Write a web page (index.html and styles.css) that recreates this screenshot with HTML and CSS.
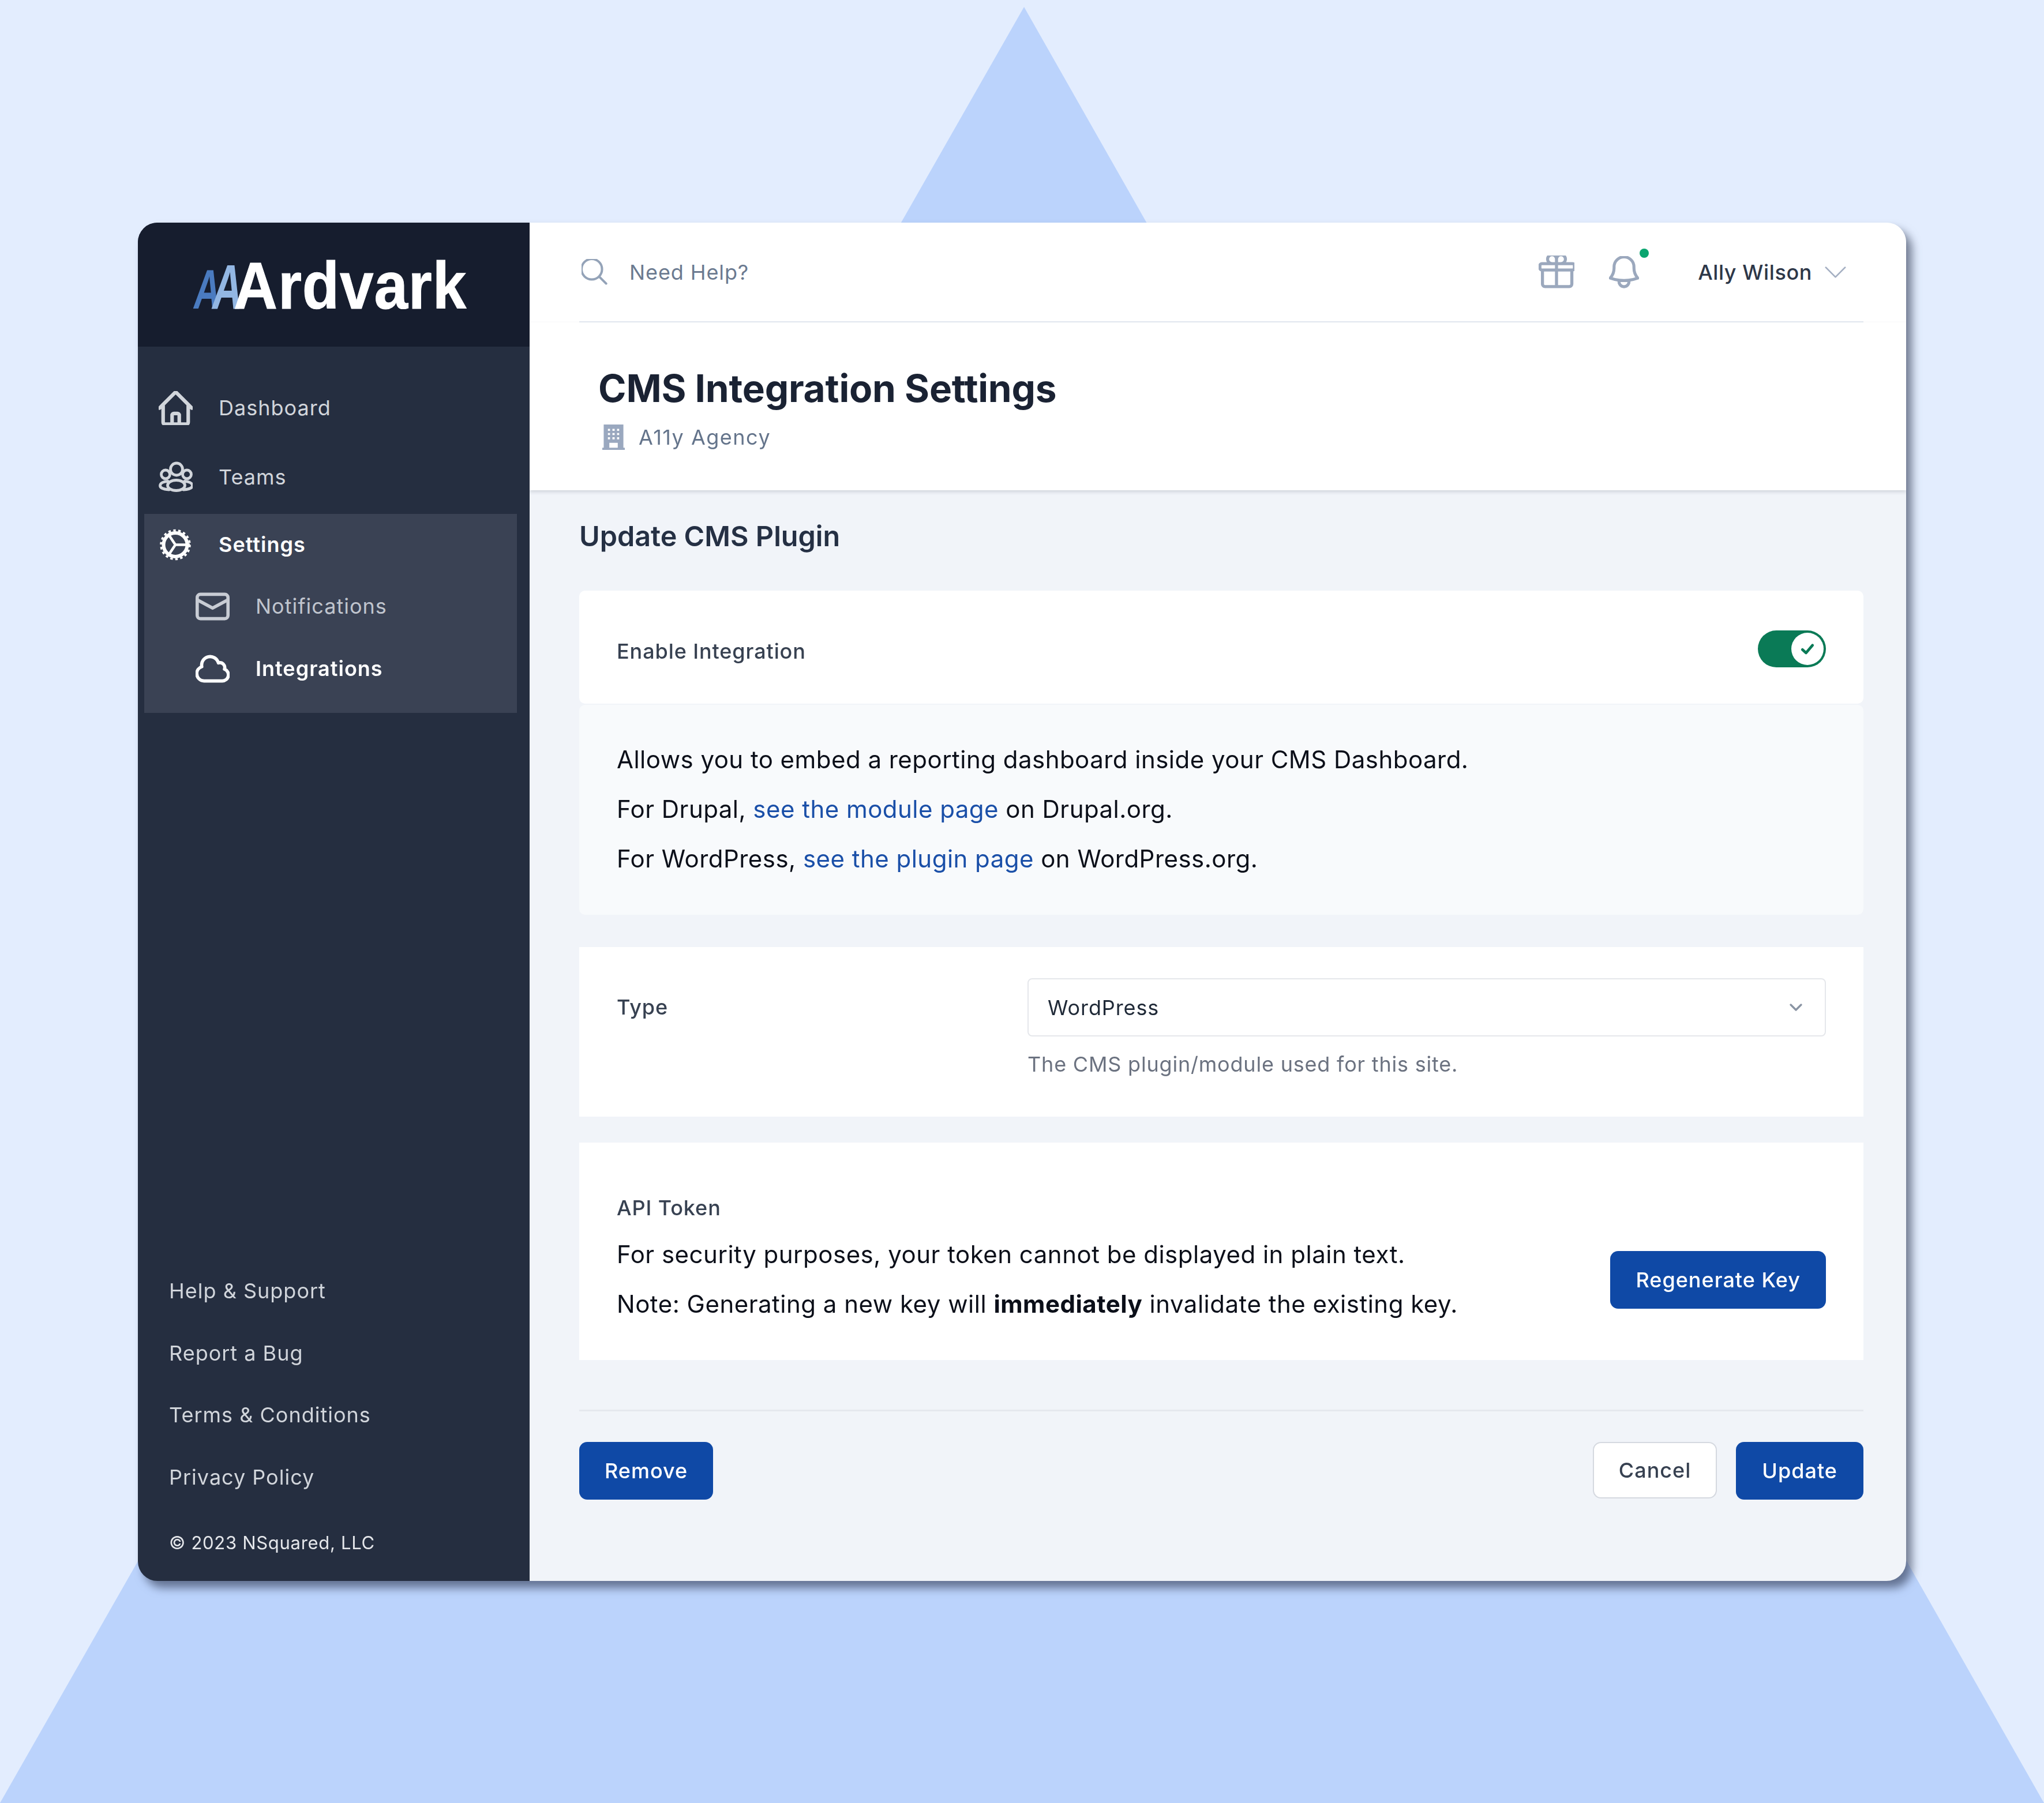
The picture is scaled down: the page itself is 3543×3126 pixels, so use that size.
FILE: index.html
```html
<!DOCTYPE html>
<html lang="en">
<head>
    <meta charset="UTF-8">
    <title>CMS Integration Settings</title>
    <link rel="stylesheet" href="styles.css">
</head>
<body>
    <div class="backdrop"></div>
    <div class="window">
        <aside class="sidebar">
            <div class="logo"><span class="logo-a logo-a1">A</span><span class="logo-a logo-a2">A</span><span class="logo-word">Ardvark</span></div>
            <nav class="nav">
                <a class="nav-item">
                    <svg class="icon icon-bold" viewBox="2.5 2.5 19 19"><path d="M3 12l2-2m0 0l7-7 7 7M5 10v10a1 1 0 001 1h3m10-11l2 2m-2-2v10a1 1 0 01-1 1h-3m-6 0a1 1 0 001-1v-4a1 1 0 011-1h2a1 1 0 011 1v4a1 1 0 001 1m-6 0h6"/></svg>
                    Dashboard
                </a>
                <a class="nav-item">
                    <svg class="icon icon-team" viewBox="9 7.500 59 59"><circle cx="40" cy="23" r="10.500"/><circle cx="21" cy="32" r="7.500"/><circle cx="58" cy="32" r="7.500"/><ellipse cx="39.500" cy="51" rx="15" ry="9"/><path d="M25 44c-8 0-13.500 3.500-13.500 7.500S18 58 27 58.500M54 44c8 0 13.500 3.500 13.500 7.500S61 58 52 58.500"/></svg>
                    Teams
                </a>
                <div class="nav-group">
                    <a class="nav-item nav-parent">
                        <svg class="icon icon-white icon-cog" viewBox="10 10.500 59 59"><circle cx="39" cy="40" r="20.500" stroke-width="6"/><circle class="teeth" cx="39" cy="40" r="25"/><path d="M39 40h25M39 40L27 22M39 40L27 58"/></svg>
                        Settings
                    </a>
                    <a class="nav-item nav-sub">
                        <svg class="icon icon-sub icon-bold" viewBox="1.500 3.500 21 17"><rect x="2.500" y="4.500" width="19" height="15" rx="2"/><path d="M2.700 8l9.300 5 9.300-5"/></svg>
                        Notifications
                    </a>
                    <a class="nav-item nav-sub nav-current">
                        <svg class="icon icon-white icon-bold" viewBox="1.500 3.500 21 17"><path d="M2.250 15a4.500 4.500 0 0 0 4.500 4.500H18a3.750 3.750 0 0 0 1.332-7.257 3 3 0 0 0-3.758-3.848 5.250 5.250 0 0 0-10.233 2.330A4.502 4.502 0 0 0 2.250 15Z"/></svg>
                        Integrations
                    </a>
                </div>
            </nav>
            <div class="side-foot">
                <a class="foot-link">Help &amp; Support</a>
                <a class="foot-link">Report a Bug</a>
                <a class="foot-link">Terms &amp; Conditions</a>
                <a class="foot-link">Privacy Policy</a>
                <p class="copyright">© 2023 NSquared, LLC</p>
            </div>
        </aside>

        <main class="main">
            <div class="top-wrap">
                <header class="topbar">
                    <div class="search">
                        <svg class="search-icon" viewBox="3 3 19 19"><path d="m21 21-5.197-5.197m0 0A7.500 7.500 0 1 0 5.196 5.196a7.500 7.500 0 0 0 10.607 10.607Z"/></svg>
                        <span>Need Help?</span>
                    </div>
                    <svg class="gift" viewBox="1.500 3 21 18.800"><path d="M21 11.250v8.250a1.500 1.500 0 0 1-1.500 1.500H5.250a1.500 1.500 0 0 1-1.500-1.500v-8.250M12 4.875A2.625 2.625 0 1 0 9.375 7.500H12m0-2.625V7.500m0-2.625A2.625 2.625 0 1 1 14.625 7.500H12m0 0V21m-8.625-9.750h18c.621 0 1.125-.504 1.125-1.125v-1.500c0-.621-.504-1.125-1.125-1.125h-18c-.621 0-1.125.504-1.125 1.125v1.500c0 .621.504 1.125 1.125 1.125Z"/></svg>
                    <div class="bell-wrap">
                        <svg class="bell" viewBox="3 2.500 18 19.500"><path d="M14.857 17.082a23.848 23.848 0 0 0 5.454-1.310A8.967 8.967 0 0 1 18 9.750V9A6 6 0 0 0 6 9v.75a8.967 8.967 0 0 1-2.312 6.022c1.733.64 3.560 1.085 5.455 1.310m5.714 0a24.255 24.255 0 0 1-5.714 0m5.714 0a3 3 0 1 1-5.714 0"/></svg>
                        <span class="dot"></span>
                    </div>
                    <div class="user">
                        <span>Ally Wilson</span>
                        <svg class="user-chevron" viewBox="4 7.500 16 9"><path d="m19.500 8.250-7.500 7.500-7.500-7.500"/></svg>
                    </div>
                </header>
            </div>

            <section class="page-head">
                <h1>CMS Integration Settings</h1>
                <div class="agency">
                    <svg class="building" viewBox="0 0 16 18"><path fill-rule="evenodd" d="M1 0h14v16.500h1V18H0v-1.500h1zM4 3v1.500h1.500V3zm3.200 0v1.500h1.600V3zm3.300 0v1.500H12V3zM4 6v1.500h1.500V6zm3.200 0v1.500h1.600V6zm3.300 0v1.500H12V6zM4 9v1.500h1.500V9zm3.200 0v1.500h1.600V9zm3.300 0v1.500H12V9zM5 13v3.500h6V13z"/></svg>
                    <span>A11y Agency</span>
                </div>
            </section>

            <section class="content">
                <h2>Update CMS Plugin</h2>

                <div class="card card-toggle">
                    <span class="label">Enable Integration</span>
                    <span class="toggle">
                        <span class="toggle-knob">
                            <svg viewBox="0 0 12 12"><path d="M2.500 6.500l2.500 2.300 4.500-5.300"/></svg>
                        </span>
                    </span>
                </div>

                <div class="card card-info">
                    <p>Allows you to embed a reporting dashboard inside your CMS Dashboard.</p>
                    <p>For Drupal, <a class="link">see the module page</a> on Drupal.org.</p>
                    <p>For WordPress, <a class="link">see the plugin page</a> on WordPress.org.</p>
                </div>

                <div class="card card-type">
                    <span class="label type-label">Type</span>
                    <div>
                        <div class="select">
                            <span>WordPress</span>
                            <svg viewBox="0 0 20 20"><path d="M5.500 7.500l4.500 4.500 4.500-4.500"/></svg>
                        </div>
                        <p class="hint">The CMS plugin/module used for this site.</p>
                    </div>
                </div>

                <div class="card card-token">
                    <div>
                        <div class="label token-label">API Token</div>
                        <p>For security purposes, your token cannot be displayed in plain text.</p>
                        <p>Note: Generating a new key will <strong>immediately</strong> invalidate the existing key.</p>
                    </div>
                    <button class="btn btn-primary btn-regen">Regenerate Key</button>
                </div>

                <div class="actions">
                    <button class="btn btn-primary">Remove</button>
                    <div class="actions-right">
                        <button class="btn btn-plain">Cancel</button>
                        <button class="btn btn-primary btn-update">Update</button>
                    </div>
                </div>
            </section>
        </main>
    </div>
</body>
</html>
```

FILE: styles.css
```css
* {
    box-sizing: border-box;
}
html, body {
    margin: 0;
    padding: 0;
}
body {
    position: relative;
    width: 3543px;
    height: 3126px;
    padding: 386px 239px 0;
    overflow: hidden;
    background-color: #e3edfe;
    font-family: Inter, "Noto Sans", sans-serif;
    font-size: 36px;
    letter-spacing: 0.9px;
    color: #111827;
}
p, h1, h2 {
    margin: 0;
}
svg {
    flex: none;
    fill: none;
    stroke: currentColor;
    stroke-linecap: round;
    stroke-linejoin: round;
    stroke-width: 1.7;
}

/* big triangle behind the window */
.backdrop {
    position: absolute;
    top: 12px;
    left: 0;
    width: 3543px;
    height: 3114px;
    background-color: #bbd3fc;
    clip-path: polygon(50.1% 0, 100% 100%, 0 100%);
}

.window {
    position: relative;
    display: flex;
    width: 3065px;
    height: 2355px;
    border-radius: 34px;
    filter: drop-shadow(10px 12px 8px rgba(45, 55, 80, 0.62));
}

/* sidebar */
.sidebar {
    display: flex;
    flex-direction: column;
    flex: none;
    width: 679px;
    border-radius: 34px 0 0 34px;
    overflow: hidden;
    background-color: #252e40;
    color: #d1d5db;
}
.logo {
    display: flex;
    align-items: baseline;
    flex: none;
    height: 215px;
    padding: 43px 0 0 97px;
    background-color: #161d2e;
    color: #fff;
    font-family: "Liberation Sans", Arial, sans-serif;
    font-weight: 700;
    letter-spacing: 0;
}
.logo-a {
    display: block;
    font-style: italic;
    transform: scaleX(0.66);
    transform-origin: left bottom;
}
.logo-a1 {
    width: 32px;
    font-size: 96px;
    color: #4a7bc0;
}
.logo-a2 {
    width: 37px;
    font-size: 109px;
    color: #93b7e3;
}
.logo-word {
    font-size: 115px;
    letter-spacing: 1px;
    -webkit-text-stroke: 1px #fff;
    transform: scaleX(0.915);
    transform-origin: left bottom;
}
.nav {
    padding: 47px 22px 0 11px;
    letter-spacing: 1px;
}
.nav-item {
    display: flex;
    align-items: center;
    gap: 45px;
    height: 118px;
    margin-bottom: 2px;
    padding-left: 25px;
}
.icon {
    width: 59px;
    height: 59px;
    color: #d1d5db;
}
.icon-bold {
    stroke-width: 2;
}
.icon-team {
    stroke-width: 4.800;
}
.icon-cog {
    stroke-width: 4.500;
    stroke-linecap: butt;
}
.icon-white {
    color: #fff;
}
.icon-sub {
    color: #c8ccd4;
}
.teeth {
    stroke-width: 3.500;
    stroke-dasharray: 4.360 4.360;
    stroke-linecap: butt;
}
.nav-group {
    margin-top: 5px;
    padding-bottom: 23px;
    background-color: #3a4254;
}
.nav-parent {
    height: 106px;
    margin: 0;
    color: #fff;
    font-weight: 600;
}
.nav-sub {
    height: 108px;
    margin: 0;
    padding-left: 89px;
    color: #c0c5ce;
}
.nav-current {
    color: #fff;
    font-weight: 600;
}
.side-foot {
    margin-top: auto;
    padding: 0 0 38px 54px;
    letter-spacing: 1px;
}
.foot-link {
    display: block;
    height: 107.500px;
    line-height: 107.500px;
}
.copyright {
    margin-top: 32px;
    font-size: 31px;
    line-height: 56px;
    letter-spacing: 0.7px;
    color: #e5e7eb;
}

/* main column */
.main {
    display: flex;
    flex-direction: column;
    flex: 1;
    border-radius: 0 34px 34px 0;
    overflow: hidden;
    background-color: #f1f4f9;
}
.top-wrap {
    flex: none;
    padding: 0 74px 0 86px;
    background-color: #fff;
}
.topbar {
    display: flex;
    align-items: center;
    height: 174px;
    padding: 0 30px 0 4px;
    border-bottom: 3px solid #e5eaf1;
}
.search {
    display: flex;
    align-items: center;
    gap: 38px;
    flex: 1;
    color: #6b7a90;
}
.search-icon {
    width: 45px;
    height: 45px;
    color: #94a3b8;
}
.gift {
    width: 62px;
    height: 57px;
    color: #9ba8bd;
    stroke-width: 1.8;
}
.bell-wrap {
    position: relative;
    margin-left: 60px;
    display: flex;
}
.bell {
    width: 52px;
    height: 56px;
    color: #9ba8bd;
    stroke-width: 1.8;
}
.dot {
    position: absolute;
    top: -13px;
    left: 53px;
    width: 16px;
    height: 16px;
    border-radius: 50%;
    background-color: #0aa56f;
}
.user {
    display: flex;
    align-items: center;
    gap: 22px;
    margin-left: 102px;
    color: #2d3748;
    font-weight: 500;
    letter-spacing: 0.6px;
}
.user-chevron {
    width: 37px;
    height: 20px;
    color: #a4afc2;
    stroke-width: 1.2;
}
.page-head {
    flex: none;
    height: 291px;
    padding: 83px 0 0 119px;
    margin-top: -1px;
    background-color: #fff;
    box-shadow: 0 3px 6px rgba(60, 70, 90, 0.18);
}
.page-head h1 {
    font-size: 65.700px;
    line-height: 62px;
    font-weight: 700;
    letter-spacing: -0.2px;
    color: #1a2233;
}
.agency {
    display: flex;
    align-items: center;
    gap: 24px;
    margin-top: 32px;
    padding-left: 7px;
    letter-spacing: 1.5px;
    color: #64748b;
}
.building {
    width: 39px;
    height: 44px;
    fill: #9aa8bf;
    stroke: none;
}
.content {
    flex: 1;
    padding: 54px 74px 0 86px;
}
.content h2 {
    font-size: 48.500px;
    line-height: 52px;
    font-weight: 600;
    letter-spacing: 0;
    color: #253044;
}
.card {
    background-color: #fff;
    border-radius: 10px;
    padding: 0 65px;
}
.label {
    color: #374151;
    font-weight: 500;
}
.card-toggle {
    display: flex;
    align-items: center;
    justify-content: space-between;
    height: 196px;
    margin-top: 68px;
}
.card-toggle .label {
    margin-top: 14px;
}
.toggle {
    display: flex;
    align-items: center;
    justify-content: flex-end;
    width: 118px;
    height: 64px;
    margin-top: 5px;
    padding-right: 4px;
    border-radius: 32px;
    background-color: #0a7a56;
}
.toggle-knob {
    display: flex;
    align-items: center;
    justify-content: center;
    width: 56px;
    height: 56px;
    border-radius: 50%;
    background-color: #fff;
    color: #0a7a56;
}
.toggle-knob svg {
    width: 30px;
    height: 30px;
    stroke-width: 1.900;
}
.card-info {
    height: 364px;
    margin-top: 2px;
    padding-top: 52px;
    background-color: #f8fafc;
    line-height: 86px;
    font-size: 42px;
    letter-spacing: 0.47px;
    color: #0b0f19;
}
.link {
    color: #1a4fa8;
}
.card-type {
    display: grid;
    grid-template-columns: 712px 1fr;
    height: 294px;
    margin-top: 56px;
    padding-top: 54px;
    border-radius: 0;
}
.type-label {
    line-height: 101px;
}
.select {
    display: flex;
    align-items: center;
    justify-content: space-between;
    height: 101px;
    padding: 0 30px 0 33px;
    border: 2px solid #e5e7eb;
    border-radius: 8px;
    color: #1f2937;
}
.select svg {
    width: 40px;
    height: 40px;
    color: #8a94a3;
}
.hint {
    margin-top: 26px;
    line-height: 44px;
    letter-spacing: 0.8px;
    color: #6b7280;
}
.card-token {
    display: flex;
    align-items: flex-end;
    justify-content: space-between;
    height: 377px;
    margin-top: 45px;
    padding-top: 83px;
    padding-bottom: 54px;
    border-radius: 0;
    line-height: 86px;
    font-size: 42px;
    letter-spacing: 0.5px;
    color: #0b0f19;
}
.token-label {
    font-size: 36px;
    line-height: 60px;
    margin-bottom: 8px;
    letter-spacing: 0.9px;
}
.card-token strong {
    font-weight: 700;
}
.btn {
    height: 100px;
    padding: 0 44px;
    border: none;
    border-radius: 14px;
    font-family: inherit;
    font-size: 36px;
    letter-spacing: 1px;
    font-weight: 500;
    cursor: pointer;
}
.btn-primary {
    background-color: #0f49a6;
    color: #fff;
}
.btn-regen {
    margin-bottom: 35px;
}
.btn-update {
    padding: 0 45px;
}
.btn-plain {
    height: 98px;
    padding: 0 43px;
    border: 2px solid #d5d9e0;
    background-color: #fff;
    color: #374151;
}
.actions {
    display: flex;
    align-items: flex-start;
    justify-content: space-between;
    margin-top: 86px;
    padding-top: 53px;
    border-top: 3px solid #e5e8ee;
}
.actions-right {
    display: flex;
    gap: 33px;
}
```
